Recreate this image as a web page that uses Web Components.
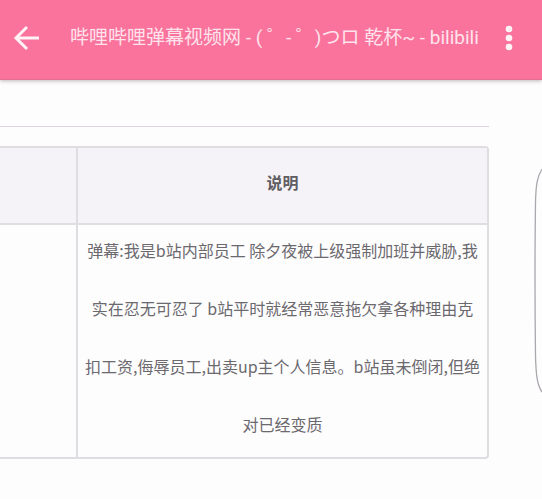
<!DOCTYPE html>
<html lang="zh-CN">
<head>
<meta charset="utf-8">
<meta name="viewport" content="width=device-width, initial-scale=1">
<title>哔哩哔哩弹幕视频网</title>
<style>
  html { background: #fefdfe; overflow-x: hidden; }
  body { margin: 0; font-family: "Noto Sans CJK SC", sans-serif; color: #6b696e; }
</style>
</head>
<body>
<web-page></web-page>

<template id="app-bar-template">
  <style>
    :host {
      display: flex; align-items: center; box-sizing: border-box; height: 80px;
      padding: 0 20px 4px 13px; background: #f9739c; color: #ffe3ec;
      border-bottom: 1px solid #e3708f;
      box-shadow: 0 1px 4px rgba(90, 70, 80, .4);
    }
    button { flex: none; display: grid; place-items: center; padding: 0; border: 0; background: none; color: #fff3f5; width: 27px; height: 40px; }
    h1 {
      flex: 1; min-width: 0; margin: 0 0 0 30px; font-size: 19px; line-height: 28px; font-weight: 400;
      font-family: Roboto, "Noto Sans CJK SC", sans-serif; white-space: pre;
    }
    svg { display: block; }
  </style>
  <button aria-label="返回">
    <svg width="27" height="26" viewBox="0 0 27 26" fill="none" stroke="currentColor" stroke-width="3"><path d="M14 2 3 13l11 11M3 13h23"/></svg>
  </button>
  <h1><slot></slot></h1>
  <button aria-label="更多">
    <svg width="8" height="26" viewBox="0 0 8 26" fill="currentColor"><circle cx="4" cy="4" r="3.3"/><circle cx="4" cy="13" r="3.3"/><circle cx="4" cy="22" r="3.3"/></svg>
  </button>
</template>

<template id="report-table-template">
  <style>
    :host { display: block; }
    table { width: 100%; table-layout: fixed; border-collapse: separate; border-spacing: 0; border: 2px solid #dfdce2; border-left: 0; border-radius: 0 4px 4px 0; }
    th, td { box-sizing: border-box; padding: 0; text-align: center; font-size: 16px; }
    th { height: 77px; padding-bottom: 8px; background: #f5f3f7; border-bottom: 2px solid #dfdce2; line-height: 24px; color: #5f5d62; }
    td { white-space: nowrap; line-height: 58px; }
    tr > :first-child { width: 78px; border-right: 2px solid #dfdce2; }
    .lines { margin: -4px 0 4px; }
  </style>
  <table>
    <thead><tr><th scope="col"></th><th scope="col"><slot name="heading"></slot></th></tr></thead>
    <tbody><tr><td></td><td><div class="lines"><slot></slot></div></td></tr></tbody>
  </table>
</template>

<template id="edge-handle-template">
  <style>
    :host { position: absolute; right: 0; top: 166px; width: 8px; height: 228px; color: #aaa7ad; }
    svg { display: block; }
  </style>
  <svg width="8" height="228" viewBox="0 0 8 228" fill="none" stroke="currentColor" stroke-width="1.3"><path d="M8 3C3 11 2 19 1.5 36Q.5 110 1.5 190C2 208 3 219 8 226"/></svg>
</template>

<template id="web-page-template">
  <style>
    :host { display: block; position: relative; min-height: 100vh; }
    main { padding: 46px 53px 40px 0; }
    hr { margin: 0 0 19px; border: 0; border-top: 1px solid #dcd4de; }
  </style>
  <app-bar>哔哩哔哩弹幕视频网 - ( ゜- ゜)つロ 乾杯~ - bilibili</app-bar>
  <main>
    <hr>
    <report-table>
      <span slot="heading">说明</span>弹幕:我是b站内部员工 除夕夜被上级强制加班并威胁,我<br>实在忍无可忍了 b站平时就经常恶意拖欠拿各种理由克<br>扣工资,侮辱员工,出卖up主个人信息。b站虽未倒闭,但绝<br>对已经变质</report-table>
  </main>
  <edge-handle></edge-handle>
</template>

<script>
  function define(name) {
    customElements.define(name, class extends HTMLElement {
      constructor() {
        super();
        this.attachShadow({ mode: "open" })
          .append(document.getElementById(name + "-template").content.cloneNode(true));
      }
    });
  }
  ["app-bar", "report-table", "edge-handle", "web-page"].forEach(define);
</script>
</body>
</html>
